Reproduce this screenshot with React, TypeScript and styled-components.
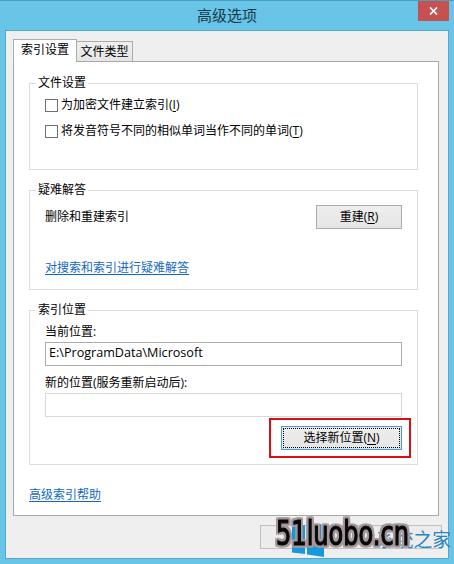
import React from 'react';
import styled, { createGlobalStyle } from 'styled-components';

const App: React.FC = () => (
  <>
    <GlobalStyle />
    <Window>
      <TitleBar>
        高级选项
        <CloseButton aria-label="关闭">
          <svg width="9" height="8" viewBox="0 0 9 8">
            <path d="M1 0.5L8 7.5M8 0.5L1 7.5" stroke="#fff" strokeWidth="1.7" />
          </svg>
        </CloseButton>
      </TitleBar>
      <Client>
        <Tabs>
          <Tab $active>索引设置</Tab>
          <Tab>文件类型</Tab>
        </Tabs>
        <Panel>
          <Group $height={95}>
            <Legend>文件设置</Legend>
            <Option>
              <Checkbox />
              <span>为加密文件建立索引(<u>I</u>)</span>
            </Option>
            <Option>
              <Checkbox />
              <span>将发音符号不同的相似单词当作不同的单词(<u>T</u>)</span>
            </Option>
          </Group>
          <Group $height={108}>
            <Legend>疑难解答</Legend>
            <RebuildRow>
              删除和重建索引
              <Button $width={86}>重建(<u>R</u>)</Button>
            </RebuildRow>
            <Link>对搜索和索引进行疑难解答</Link>
          </Group>
          <Group $height={163}>
            <Legend>索引位置</Legend>
            <Label $top={5}>当前位置:</Label>
            <Field>E:\ProgramData\Microsoft</Field>
            <Label $top={9}>新的位置(服务重新启动后):</Label>
            <Field $disabled />
            <ChooseRow>
              <Highlight>
                <Button $width={121} $focused>
                  选择新位置(<u>N</u>)
                </Button>
              </Highlight>
            </ChooseRow>
          </Group>
          <HelpLink>高级索引帮助</HelpLink>
        </Panel>
        <Footer>
          <FooterButton />
          <FooterButton />
        </Footer>
      </Client>
      <Watermark width="190" height="54" viewBox="0 0 190 54">
        <path d="M28 17L41 15V30H28ZM43 15L57 14V30H43ZM28 32H41V44L28 42.500ZM43 32H60V47L43 44.500Z" fill="#1698dc" />
        <SiteName x="112" y="37" textLength="75" lengthAdjust="spacingAndGlyphs">系统之家</SiteName>
        <Domain x="12" y="35" textLength="133" lengthAdjust="spacingAndGlyphs">51luobo.cn</Domain>
      </Watermark>
    </Window>
  </>
)

const GlobalStyle = createGlobalStyle`
  * {
    box-sizing: border-box;
  }
  body {
    margin: 0;
    overflow: hidden;
    color: #000;
    font: 12px/16px "Open Sans", "Noto Sans CJK SC", sans-serif;
  }
  u {
    text-underline-offset: 2px;
  }
`

const Window = styled.div`
  position: relative;
  display: flex;
  flex-direction: column;
  width: 454px;
  height: 564px;
  padding: 0 5px 5px;
  background: #68c5e7;
  border-top: 1px solid #4a9fc3;
`

const TitleBar = styled.header`
  position: relative;
  display: flex;
  justify-content: center;
  height: 29px;
  padding-top: 4px;
  font-size: 15px;
  line-height: 20px;
  color: #173947;
`

const CloseButton = styled.button`
  position: absolute;
  top: 0;
  right: 0;
  display: flex;
  align-items: center;
  justify-content: center;
  width: 31px;
  height: 20px;
  padding: 0;
  border: 0;
  background: #c75050;
`

const Client = styled.main`
  flex: 1;
  padding: 8px 9px 0 7px;
  background: #efefef;
  border: 1px solid #55a7c5;
`

const Tabs = styled.div`
  display: flex;
  align-items: flex-end;
  height: 22px;
`

const Tab = styled.div<{
  $active?: boolean
}>`
  position: relative;
  z-index: ${({ $active }) => $active ? 1 : 0};
  width: ${({ $active }) => $active ? 64 : 56}px;
  height: ${({ $active }) => $active ? 23 : 20}px;
  margin-bottom: ${({ $active }) => $active ? -1 : 0}px;
  padding-top: 2px;
  text-align: center;
  background: ${({ $active }) => $active ? '#fff' : 'linear-gradient(#f0f0f0, #e5e5e5)'};
  border: 1px solid #acacac;
  border-bottom: 0;
  border-left-width: ${({ $active }) => $active ? 1 : 0}px;
`

const Panel = styled.div`
  height: 455px;
  padding: 13px 20px 0 15px;
  background: #fff;
  border: 1px solid #a9a9ab;
`

const Group = styled.fieldset<{
  $height: number
}>`
  height: ${({ $height }) => $height}px;
  margin: 0 0 12px;
  padding: 0 15px;
  border: 1px solid #dcdcdc;
`

const Legend = styled.legend`
  height: 17px;
  margin-left: -9px;
  padding: 0 2px;
`

const Option = styled.label`
  display: flex;
  align-items: center;
  gap: 3px;
  height: 16px;
  margin: 5px 0 10px;
  white-space: nowrap;
`

const Checkbox = styled.span`
  width: 13px;
  height: 13px;
  background: #fff;
  border: 1px solid #707070;
`

const Button = styled.button<{
  $width: number
  $focused?: boolean
}>`
  display: block;
  width: ${({ $width }) => $width}px;
  height: 24px;
  padding: 0 0 1px;
  font: inherit;
  color: #000;
  text-align: center;
  background: linear-gradient(#eee, #e5e5e5);
  border: 1px solid ${({ $focused }) => $focused ? '#4a98dc' : '#acacac'};
  ${({ $focused }) => $focused && 'outline: 1px dotted #000; outline-offset: -3px'};
`

const RebuildRow = styled.div`
  display: flex;
  align-items: center;
  justify-content: space-between;
  height: 24px;
  margin-top: 6px;
`

const Link = styled.a`
  display: block;
  width: fit-content;
  margin-top: 31px;
  color: #1268bf;
  text-decoration: underline;
  text-underline-offset: 2px;
`

const HelpLink = styled(Link)`
  margin-top: 22px;
`

const Label = styled.div<{
  $top: number
}>`
  height: 16px;
  margin-top: ${({ $top }) => $top}px;
`

const Field = styled.div<{
  $disabled?: boolean
}>`
  height: 24px;
  margin-top: 2px;
  padding: 2px 3px;
  font-size: 12.6px;
  border: 1px solid ${({ $disabled }) => $disabled ? '#d9d9d9' : '#ababab'};
`

const ChooseRow = styled.div`
  display: flex;
  justify-content: flex-end;
  margin: 1px -9px 0 0;
`

const Highlight = styled.div`
  height: 40px;
  padding: 6px 7px 6px 10px;
  border: 2px solid #dc1012;
`

const Footer = styled.footer`
  display: flex;
  justify-content: flex-end;
  margin: 9px -3px 0 0;
`

const FooterButton = styled.div`
  width: 91px;
  height: 24px;
  border: 1px solid #c1c1c1;
  background: #ececec;

  & + & {
    border-left: 0;
  }
`

const Watermark = styled.svg`
  position: absolute;
  top: 509px;
  left: 264px;
  overflow: visible;
`

const SiteName = styled.text`
  font: 19px "Noto Sans CJK SC", sans-serif;
  fill: #2a86c0;
`

const Domain = styled.text`
  font: 34px "DejaVu Sans Condensed", "DejaVu Sans", sans-serif;
  fill: #080808;
  stroke: #080808;
  stroke-width: 1.2px;
  filter: drop-shadow(2px 0 0 #a3979b) drop-shadow(-2px 0 0 #a3979b) drop-shadow(0 2px 0 #a3979b) drop-shadow(0 -2px 0 #a3979b);
`

export default App;
